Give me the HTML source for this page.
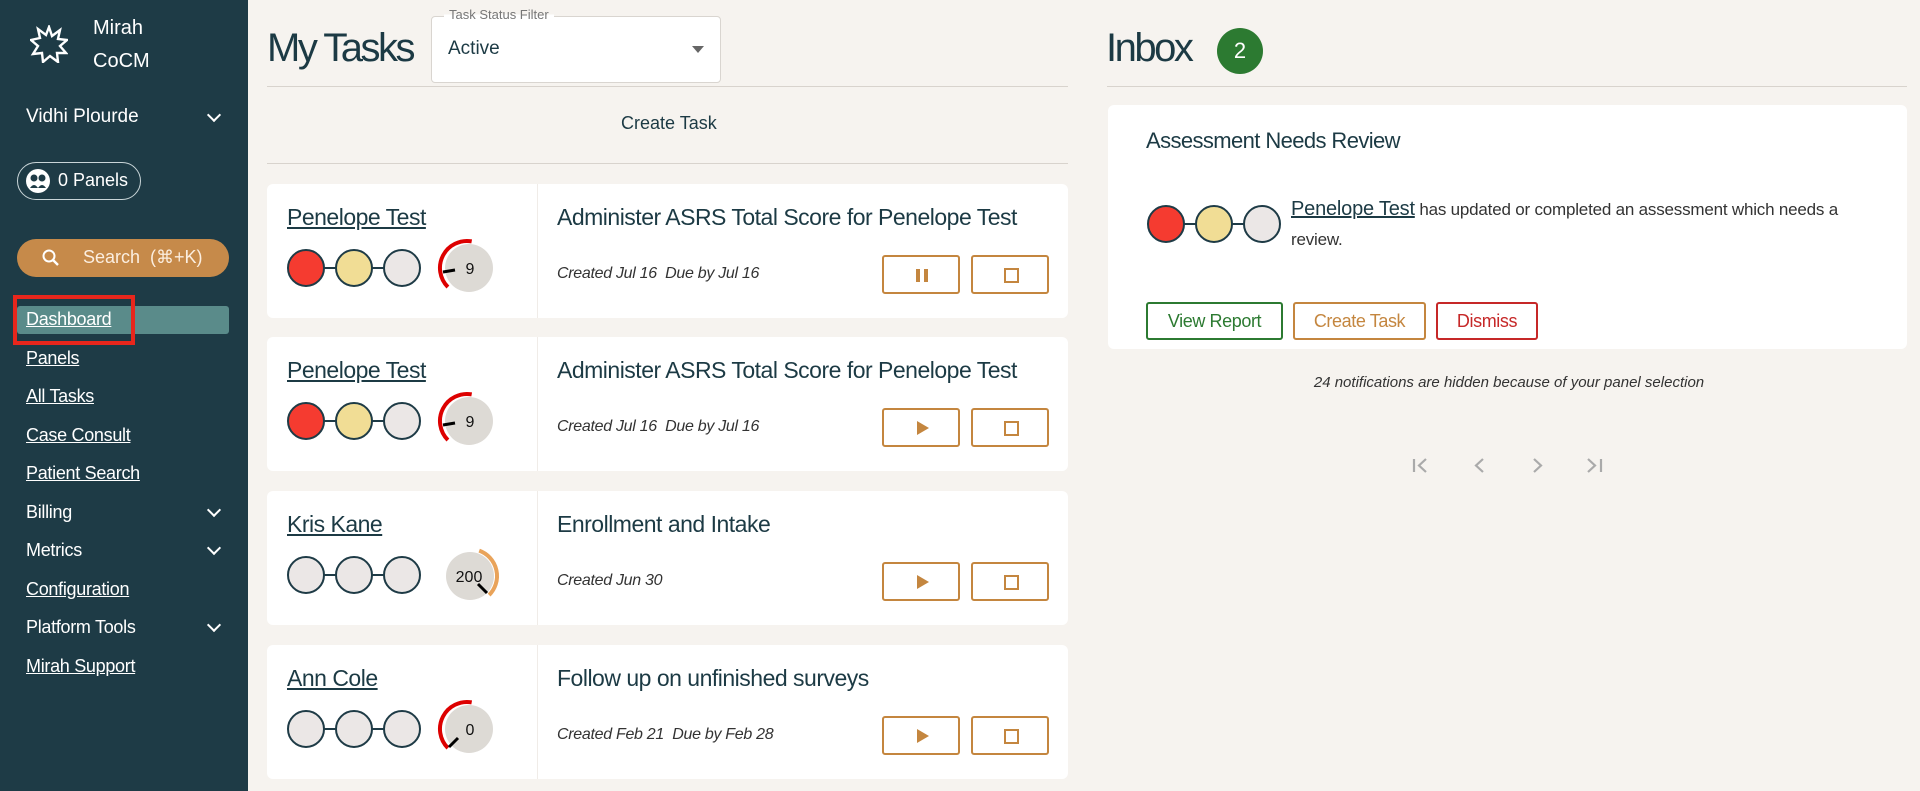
<!DOCTYPE html>
<html><head><meta charset="utf-8"><style>
*{margin:0;padding:0;box-sizing:border-box}
body{width:1920px;height:791px;overflow:hidden;background:#f6f3ef;font-family:"Liberation Sans",sans-serif;color:#1c3a44;position:relative}
.a{position:absolute}
#side{left:0;top:0;width:248px;height:791px;background:#1e3b46;color:#fff}
.nav{position:absolute;left:26px;font-size:18px;color:#fff;text-decoration:underline;letter-spacing:-.3px}
.nl{text-decoration:none}
.chev{position:absolute;left:209px;width:10px;height:10px;border-right:2px solid #fff;border-bottom:2px solid #fff;transform:rotate(45deg)}
.card{position:absolute;left:267px;width:801px;height:134px;background:#fff;border-radius:6px}
.card .div{position:absolute;left:270px;top:0;width:1px;height:134px;background:#f0ece8}
.card .nm{position:absolute;left:20px;top:20px;font-size:23px;text-decoration:underline;letter-spacing:-.5px}
.card .tt{position:absolute;left:290px;top:20px;font-size:23px;letter-spacing:-.5px}
.card .dt{position:absolute;left:290px;top:81px;font-size:16px;font-style:italic;color:#333;letter-spacing:-.3px}
.card .b{position:absolute;top:71px;width:78px;height:39px;border:2px solid #c4863f;border-radius:3px}
.card .b1{left:615px}.card .b2{left:704px}
.card svg{position:absolute}
.btn{position:absolute;top:302px;height:38px;border:2px solid;border-radius:3px;font-size:18px;text-align:center;line-height:34px;letter-spacing:-.4px;background:#fff}
</style></head><body>
<div id="side" class="a">
<svg class="a" style="left:30px;top:25px" width="38" height="38" viewBox="0 0 38 38"><polygon points="19,2 22,11 30,5 28,14 37,15 30,21 36,28 27,28 28,37 20,31 13,37 12,28 3,29 8,21 1,15 10,13 8,4 16,10" fill="none" stroke="#fff" stroke-width="2.4"/></svg>
<div class="a" style="left:93px;top:17px;font-size:20px">Mirah</div>
<div class="a" style="left:93px;top:50px;font-size:20px">CoCM</div>
<div class="a" style="left:26px;top:106px;font-size:19px">Vidhi Plourde</div>
<div class="chev" style="top:110px"></div>
<div class="a" style="left:17px;top:162px;width:124px;height:38px;border:1px solid #c9d5d8;border-radius:19px"></div>
<svg class="a" style="left:25px;top:168px" width="26" height="26"><circle cx="13" cy="13" r="12" fill="#fff"/><circle cx="9" cy="10" r="3.5" fill="#1e3b46"/><circle cx="17" cy="10" r="3.5" fill="#1e3b46"/><path d="M5 20 Q9 14 13 20 Q17 14 21 20 Z" fill="#1e3b46"/></svg>
<div class="a" style="left:58px;top:170px;font-size:18px">0 Panels</div>
<div class="a" style="left:17px;top:239px;width:212px;height:38px;background:#c68a4a;border-radius:19px"></div>
<svg class="a" style="left:42px;top:249px" width="18" height="18"><circle cx="7" cy="7" r="5.5" fill="none" stroke="#fff" stroke-width="2"/><line x1="11" y1="11" x2="16" y2="16" stroke="#fff" stroke-width="2.4"/></svg>
<div class="a" style="left:83px;top:247px;font-size:18px;color:#fbeee0">Search &nbsp;(⌘+K)</div>
<div class="a" style="left:17px;top:306px;width:212px;height:28px;background:#5a8b8a;border-radius:3px"></div>
<div class="a" style="left:13px;top:295px;width:122px;height:50px;border:4px solid #e8261c"></div>
<div class="nav" style="top:309px">Dashboard</div>
<div class="nav" style="top:348px">Panels</div>
<div class="nav" style="top:386px">All Tasks</div>
<div class="nav" style="top:425px">Case Consult</div>
<div class="nav" style="top:463px">Patient Search</div>
<div class="nav nl" style="top:502px">Billing</div><div class="chev" style="top:505px"></div>
<div class="nav nl" style="top:540px">Metrics</div><div class="chev" style="top:543px"></div>
<div class="nav" style="top:579px">Configuration</div>
<div class="nav nl" style="top:617px">Platform Tools</div><div class="chev" style="top:620px"></div>
<div class="nav" style="top:656px">Mirah Support</div>
</div>

<div class="a" style="left:267px;top:26px;font-size:40px;letter-spacing:-2.5px">My Tasks</div>
<div class="a" style="left:431px;top:16px;width:290px;height:67px;background:#fff;border:1px solid #d9d5d0;border-radius:4px"></div>
<div class="a" style="left:444px;top:7px;padding:0 5px;font-size:13px;color:#777;background:linear-gradient(#f6f3ef 50%,#fff 50%)">Task Status Filter</div>
<div class="a" style="left:448px;top:38px;font-size:19px">Active</div>
<div class="a" style="left:692px;top:46px;border:6px solid transparent;border-top:7px solid #666"></div>
<div class="a" style="left:267px;top:86px;width:801px;height:1px;background:#d8d3cd"></div>
<div class="a" style="left:621px;top:113px;font-size:18px">Create Task</div>
<div class="a" style="left:267px;top:163px;width:801px;height:1px;background:#d8d3cd"></div>

<div class="card" style="top:184px"><div class="div"></div><div class="nm">Penelope Test</div><div class="tt">Administer ASRS Total Score for Penelope Test</div><div class="dt">Created Jul 16 &nbsp;Due by Jul 16</div>
<svg style="left:18px;top:63px" width="140" height="42"><line x1="20" y1="21" x2="118" y2="21" stroke="#1e3b46" stroke-width="2"/><circle cx="21" cy="21" r="18" fill="#f53b30" stroke="#1e3b46" stroke-width="2"/><circle cx="69" cy="21" r="18" fill="#f1dd95" stroke="#1e3b46" stroke-width="2"/><circle cx="117" cy="21" r="18" fill="#ebe7e6" stroke="#1e3b46" stroke-width="2"/></svg>
<svg style="left:170px;top:54px" width="60" height="60"><circle cx="32" cy="30" r="24" fill="#dddad5"/><path d="M10.9 49.1 A27 27 0 0 1 34.7 3.4" fill="none" stroke="#d00" stroke-width="4"/><line x1="18" y1="32" x2="6" y2="34" stroke="#000" stroke-width="3"/><text x="33" y="36" font-size="16" text-anchor="middle" fill="#111">9</text></svg>
<div class="b b1"><div class="a" style="left:32px;top:12px;width:4px;height:13px;background:#c4863f"></div><div class="a" style="left:40px;top:12px;width:4px;height:13px;background:#c4863f"></div></div>
<div class="b b2"><div class="a" style="left:31px;top:11px;width:15px;height:15px;border:2px solid #c4863f"></div></div></div>

<div class="card" style="top:337px"><div class="div"></div><div class="nm">Penelope Test</div><div class="tt">Administer ASRS Total Score for Penelope Test</div><div class="dt">Created Jul 16 &nbsp;Due by Jul 16</div>
<svg style="left:18px;top:63px" width="140" height="42"><line x1="20" y1="21" x2="118" y2="21" stroke="#1e3b46" stroke-width="2"/><circle cx="21" cy="21" r="18" fill="#f53b30" stroke="#1e3b46" stroke-width="2"/><circle cx="69" cy="21" r="18" fill="#f1dd95" stroke="#1e3b46" stroke-width="2"/><circle cx="117" cy="21" r="18" fill="#ebe7e6" stroke="#1e3b46" stroke-width="2"/></svg>
<svg style="left:170px;top:54px" width="60" height="60"><circle cx="32" cy="30" r="24" fill="#dddad5"/><path d="M10.9 49.1 A27 27 0 0 1 34.7 3.4" fill="none" stroke="#d00" stroke-width="4"/><line x1="18" y1="32" x2="6" y2="34" stroke="#000" stroke-width="3"/><text x="33" y="36" font-size="16" text-anchor="middle" fill="#111">9</text></svg>
<div class="b b1"><div class="a" style="left:33px;top:11px;border-left:12px solid #c4863f;border-top:7px solid transparent;border-bottom:7px solid transparent"></div></div>
<div class="b b2"><div class="a" style="left:31px;top:11px;width:15px;height:15px;border:2px solid #c4863f"></div></div></div>

<div class="card" style="top:491px"><div class="div"></div><div class="nm">Kris Kane</div><div class="tt">Enrollment and Intake</div><div class="dt">Created Jun 30</div>
<svg style="left:18px;top:63px" width="140" height="42"><line x1="20" y1="21" x2="118" y2="21" stroke="#1e3b46" stroke-width="2"/><circle cx="21" cy="21" r="18" fill="#ebe7e6" stroke="#1e3b46" stroke-width="2"/><circle cx="69" cy="21" r="18" fill="#ebe7e6" stroke="#1e3b46" stroke-width="2"/><circle cx="117" cy="21" r="18" fill="#ebe7e6" stroke="#1e3b46" stroke-width="2"/></svg>
<svg style="left:173px;top:55px" width="64" height="60"><circle cx="30" cy="30" r="24" fill="#dddad5"/><path d="M39.2 4.6 A27 27 0 0 1 49.1 49.1" fill="none" stroke="#e9a35a" stroke-width="4"/><line x1="38" y1="38" x2="47" y2="47" stroke="#000" stroke-width="3"/><text x="29" y="36" font-size="16" text-anchor="middle" fill="#111">200</text></svg>
<div class="b b1"><div class="a" style="left:33px;top:11px;border-left:12px solid #c4863f;border-top:7px solid transparent;border-bottom:7px solid transparent"></div></div>
<div class="b b2"><div class="a" style="left:31px;top:11px;width:15px;height:15px;border:2px solid #c4863f"></div></div></div>

<div class="card" style="top:645px"><div class="div"></div><div class="nm">Ann Cole</div><div class="tt">Follow up on unfinished surveys</div><div class="dt">Created Feb 21 &nbsp;Due by Feb 28</div>
<svg style="left:18px;top:63px" width="140" height="42"><line x1="20" y1="21" x2="118" y2="21" stroke="#1e3b46" stroke-width="2"/><circle cx="21" cy="21" r="18" fill="#ebe7e6" stroke="#1e3b46" stroke-width="2"/><circle cx="69" cy="21" r="18" fill="#ebe7e6" stroke="#1e3b46" stroke-width="2"/><circle cx="117" cy="21" r="18" fill="#ebe7e6" stroke="#1e3b46" stroke-width="2"/></svg>
<svg style="left:170px;top:54px" width="60" height="60"><circle cx="32" cy="30" r="24" fill="#dddad5"/><path d="M10.9 49.1 A27 27 0 0 1 34.7 3.4" fill="none" stroke="#d00" stroke-width="4"/><line x1="21" y1="39" x2="12" y2="48" stroke="#000" stroke-width="3"/><text x="33" y="36" font-size="16" text-anchor="middle" fill="#111">0</text></svg>
<div class="b b1"><div class="a" style="left:33px;top:11px;border-left:12px solid #c4863f;border-top:7px solid transparent;border-bottom:7px solid transparent"></div></div>
<div class="b b2"><div class="a" style="left:31px;top:11px;width:15px;height:15px;border:2px solid #c4863f"></div></div></div>

<div class="a" style="left:1106px;top:26px;font-size:40px;letter-spacing:-2.5px">Inbox</div>
<div class="a" style="left:1217px;top:28px;width:46px;height:46px;border-radius:50%;background:#2c7a31;color:#fff;font-size:22px;text-align:center;line-height:46px">2</div>
<div class="a" style="left:1107px;top:86px;width:800px;height:1px;background:#d8d3cd"></div>
<div class="a" style="left:1108px;top:105px;width:799px;height:244px;background:#fff;border-radius:6px"></div>
<div class="a" style="left:1146px;top:128px;font-size:22px;letter-spacing:-.6px">Assessment Needs Review</div>
<svg class="a" style="left:1145px;top:203px" width="140" height="42"><line x1="20" y1="21" x2="118" y2="21" stroke="#1e3b46" stroke-width="2"/><circle cx="21" cy="21" r="18" fill="#f53b30" stroke="#1e3b46" stroke-width="2"/><circle cx="69" cy="21" r="18" fill="#f1dd95" stroke="#1e3b46" stroke-width="2"/><circle cx="117" cy="21" r="18" fill="#ebe7e6" stroke="#1e3b46" stroke-width="2"/></svg>
<div class="a" style="left:1291px;top:194px;width:590px;font-size:17px;line-height:30px;color:#333;letter-spacing:-.2px"><span style="font-size:20px;text-decoration:underline;color:#1c3a44">Penelope Test</span> has updated or completed an assessment which needs a review.</div>
<div class="btn" style="left:1146px;width:137px;border-color:#2c7a31;color:#2c7a31">View Report</div>
<div class="btn" style="left:1293px;width:133px;border-color:#c4863f;color:#c4863f">Create Task</div>
<div class="btn" style="left:1436px;width:102px;border-color:#c62828;color:#c62828">Dismiss</div>
<div class="a" style="left:1307px;top:374px;width:404px;text-align:center;font-size:15px;font-style:italic;color:#333">24 notifications are hidden because of your panel selection</div>
<svg class="a" style="left:1410px;top:455px" width="200" height="22" stroke="#aaa" stroke-width="2.2" fill="none"><line x1="4" y1="4" x2="4" y2="17"/><path d="M16 4 L9 10.5 L16 17"/><path d="M73 4 L66 10.5 L73 17"/><path d="M124 4 L131 10.5 L124 17"/><path d="M178 4 L185 10.5 L178 17"/><line x1="191" y1="4" x2="191" y2="17"/></svg>
</body></html>
